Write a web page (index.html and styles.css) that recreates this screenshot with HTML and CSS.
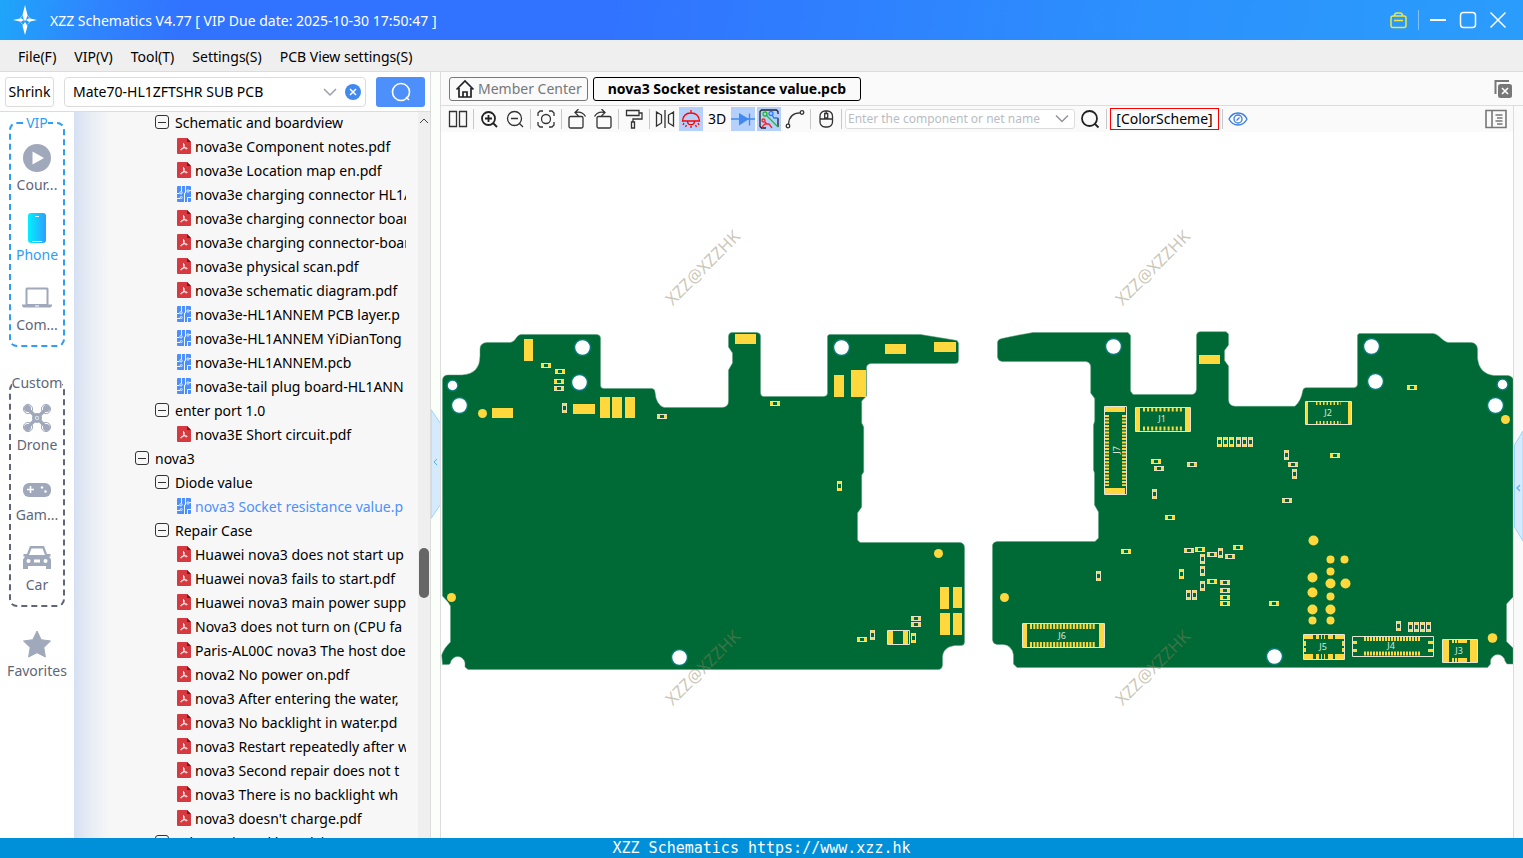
FILE: index.html
```
<!DOCTYPE html>
<html lang="en">
<head>
	<meta charset="UTF-8">
	<title>XZZ Schematics V4.77</title>
	<link rel="stylesheet" href="styles.css">
</head>
<body>
	<!-- shared symbols -->
	<svg class="defs" width="0" height="0" aria-hidden="true">
		<symbol id="pdf" viewBox="0 0 14 16">
			<path d="M1 0h9l4 4v11a1 1 0 0 1-1 1H1a1 1 0 0 1-1-1V1a1 1 0 0 1 1-1z" fill="#d63a41"/>
			<path d="M10 0l4 4h-4z" fill="#8d0f16"/>
			<path d="M6.500 5.500C7.500 6 7.300 7.800 6.800 8.800 6.200 10.200 5 12 4 12c-.8 0-.2-1.200 1.300-1.700C7 9.700 9 9.600 10 10.200c.8.600-.5 1-1.500.4C7.500 9.800 6 7.500 6.500 5.500z" fill="none" stroke="#fff" stroke-width=".9"/>
		</symbol>
		<symbol id="pcb" viewBox="0 0 14 16">
			<rect width="14" height="16" rx="1" fill="#4d90fb"/>
			<path d="M4.500 0v5.500M0 7.500h2.500M8.500 0v7h-1V16M0 12.500h3.500M14 4.500h-2M10.500 16v-4.500H14" fill="none" stroke="#fff" stroke-width=".9"/>
			<g fill="#4d90fb" stroke="#fff" stroke-width=".8"><circle cx="4" cy="6.800" r="1.200"/><circle cx="11" cy="5" r="1.200"/><circle cx="4.300" cy="11.500" r="1"/></g>
		</symbol>
		<symbol id="ph" viewBox="0 0 10 5">
			<rect width="10" height="5" fill="#e4e4d4"/><path d="M0 1h3.500v3H0zM6.500 1H10v3H6.500z" fill="#ffd83d"/><path d="M3 1h4v3H3z" fill="#006a36"/>
		</symbol>
		<symbol id="pv" viewBox="0 0 5 10">
			<rect width="5" height="10" fill="#e4e4d4"/><path d="M1 0h3v3.500H1zM1 6.500h3V10H1z" fill="#ffd83d"/><path d="M1 3h3v4H1z" fill="#006a36"/>
		</symbol>
	</svg>

	<header class="titlebar">
		<svg class="logo" viewBox="0 0 26 30" width="26" height="30">
			<circle cx="13" cy="15" r="5" fill="none" stroke="#9fd0ff" stroke-dasharray="5 2.850"/>
			<path d="M13 0l2.500 10-1.500 5-1 1-1-1-1.500-5zM13 30l2.500-9-2.500-4-2.500 4zM1 15l8-1.800 3 1.800-3 1.800zM25 15l-8-1.800-3 1.800 3 1.800z" fill="#fff"/>
		</svg>
		<h1>XZZ Schematics V4.77 [ VIP Due date: 2025-10-30 17:50:47 ]</h1>
		<div class="win">
			<button aria-label="Toolbox"><svg viewBox="0 0 18 18" width="18" height="18" fill="none" stroke="#f0e83a" stroke-width="1.500"><rect x="1" y="5" width="15" height="11.500" rx="2"/><path d="M4.500 5c0-2 1-3 2.500-3h3c1.500 0 2.500 1 2.500 3M4 9.500h9"/></svg></button>
			<i></i>
			<button aria-label="Minimize"><svg viewBox="0 0 18 18" width="18" height="18"><path d="M1 9h16" stroke="#fff" stroke-width="2"/></svg></button>
			<button aria-label="Maximize"><svg viewBox="0 0 18 18" width="18" height="18"><rect x="1.500" y="1.500" width="15" height="15" rx="3" fill="none" stroke="#fff" stroke-width="1.500"/></svg></button>
			<button aria-label="Close"><svg viewBox="0 0 18 18" width="18" height="18"><path d="M1.500 1.500l15 15M16.500 1.500l-15 15" stroke="#fff" stroke-width="1.500"/></svg></button>
		</div>
	</header>

	<nav class="menu">
		<a href="#">File(F)</a>
		<a href="#">VIP(V)</a>
		<a href="#">Tool(T)</a>
		<a href="#">Settings(S)</a>
		<a href="#">PCB View settings(S)</a>
	</nav>

	<div class="app">
		<aside class="left">
			<form class="search">
				<button type="button" class="shrink">Shrink</button>
				<div class="combo">
					<input type="text" aria-label="Search model" value="Mate70-HL1ZFTSHR SUB PCB">
					<button type="button" aria-label="History"><svg viewBox="0 0 14 10" width="14" height="10"><path d="M1 2l6 6 6-6" fill="none" stroke="#9b9fa8" stroke-width="1.500"/></svg></button>
					<button type="button" aria-label="Clear"><svg viewBox="0 0 16 16" width="16" height="16"><circle cx="8" cy="8" r="8" fill="#4189ee"/><path d="M5 5l6 6M11 5l-6 6" stroke="#fff" stroke-width="1.500"/></svg></button>
				</div>
				<button type="button" class="go" aria-label="Search"><svg viewBox="0 0 20 20" width="20" height="20" fill="none" stroke="#fff" stroke-width="1.600"><circle cx="10" cy="10" r="8.500"/><path d="M15 15l3 3"/></svg></button>
			</form>

			<div class="panes">
				<nav class="side">
					<div class="group vip">
						<b>VIP</b>
						<a href="#"><svg viewBox="0 0 30 30"><circle cx="15" cy="15" r="14" fill="#a0a8bb"/><path d="M10.500 8.500v13l11.500-6.500z" fill="#fff"/></svg>Cour...</a>
						<a href="#" class="on"><svg viewBox="0 0 30 30"><defs><linearGradient id="ph-g"><stop offset="0" stop-color="#00f2fe"/><stop offset="1" stop-color="#2f9dff"/></linearGradient></defs><rect x="6" y="0" width="18" height="30" rx="3" fill="url(#ph-g)"/><path d="M13 3.500h4M10 28.500h10" stroke="#e8fbff" stroke-width="1.200"/></svg>Phone</a>
						<a href="#"><svg viewBox="0 0 30 30" fill="#a0a8bb"><path d="M5 4.500h20a1.500 1.500 0 0 1 1.500 1.500V22h-23V6A1.500 1.500 0 0 1 5 4.500zM5.500 6.500V21h19V6.500z" fill-rule="evenodd"/><path d="M0 21.500h30V23l-1.500 1.500h-27L0 23z"/><path d="M13 22.500h4v1h-4z" fill="#fff"/></svg>Com...</a>
					</div>
					<div class="group">
						<b>Custom</b>
						<a href="#"><svg viewBox="0 0 30 30" fill="none" stroke="#a0a8bb"><path d="M6 6l6 6M24 6l-6 6M6 24l6-6M24 24l-6-6" stroke-width="3.500"/><circle cx="15" cy="15" r="3.500" stroke-width="3"/><circle cx="15" cy="15" r="1" fill="#a0a8bb"/><g fill="#a0a8bb" stroke="none"><circle cx="5.500" cy="5.500" r="3.500"/><circle cx="24.500" cy="5.500" r="3.500"/><circle cx="5.500" cy="24.500" r="3.500"/><circle cx="24.500" cy="24.500" r="3.500"/></g><circle cx="6" cy="6" r="4.600"/><circle cx="24" cy="6" r="4.600"/><circle cx="6" cy="24" r="4.600"/><circle cx="24" cy="24" r="4.600"/></svg>Drone</a>
						<a href="#"><svg viewBox="0 0 30 30"><rect x="1" y="10" width="28" height="14" rx="6" fill="#a0a8bb"/><path d="M5 16.500h7M8.500 13v7" stroke="#fff" stroke-width="1.600"/><circle cx="20" cy="14.500" r="1.200" fill="#fff"/><circle cx="23.500" cy="18.500" r="1.200" fill="#fff"/></svg>Gam...</a>
						<a href="#"><svg viewBox="0 0 30 30"><path d="M8 3h14l3 8h3.500v2.500H27l2 3V26h-5v-3H6v3H1v-9.500l2-3H1.500V11H5z" fill="#a0a8bb"/><path d="M9.500 5.500h11L23 12H7zM12 16.500h6v3h-6z" fill="#fff"/><circle cx="6.500" cy="18" r="2" fill="#fff"/><circle cx="23.500" cy="18" r="2" fill="#fff"/></svg>Car</a>
					</div>
					<a href="#" class="fav"><svg viewBox="0 0 30 30"><path d="M15 2l4.200 8.700 9.300 1.300-6.700 6.600L23.400 28 15 23.700 6.600 28l1.600-9.400L1.500 12l9.300-1.300z" fill="#a0a8bb" stroke="#a0a8bb" stroke-linejoin="round"/></svg>Favorites</a>
				</nav>

				<div class="tree">
					<ul>
						<li class="l2"><button aria-label="Collapse"></button>Schematic and boardview</li>
						<li><svg><use href="#pdf"/></svg><a href="#">nova3e Component notes.pdf</a></li>
						<li><svg><use href="#pdf"/></svg><a href="#">nova3e Location map en.pdf</a></li>
						<li><svg><use href="#pcb"/></svg><a href="#">nova3e charging connector HL1A</a></li>
						<li><svg><use href="#pdf"/></svg><a href="#">nova3e charging connector boar</a></li>
						<li><svg><use href="#pdf"/></svg><a href="#">nova3e charging connector-boar</a></li>
						<li><svg><use href="#pdf"/></svg><a href="#">nova3e physical scan.pdf</a></li>
						<li><svg><use href="#pdf"/></svg><a href="#">nova3e schematic diagram.pdf</a></li>
						<li><svg><use href="#pcb"/></svg><a href="#">nova3e-HL1ANNEM PCB layer.p</a></li>
						<li><svg><use href="#pcb"/></svg><a href="#">nova3e-HL1ANNEM YiDianTong</a></li>
						<li><svg><use href="#pcb"/></svg><a href="#">nova3e-HL1ANNEM.pcb</a></li>
						<li><svg><use href="#pcb"/></svg><a href="#">nova3e-tail plug board-HL1ANN</a></li>
						<li class="l2"><button aria-label="Collapse"></button>enter port 1.0</li>
						<li><svg><use href="#pdf"/></svg><a href="#">nova3E Short circuit.pdf</a></li>
						<li class="l1"><button aria-label="Collapse"></button>nova3</li>
						<li class="l2"><button aria-label="Collapse"></button>Diode value</li>
						<li><svg><use href="#pcb"/></svg><a href="#" class="on">nova3 Socket resistance value.p</a></li>
						<li class="l2"><button aria-label="Collapse"></button>Repair Case</li>
						<li><svg><use href="#pdf"/></svg><a href="#">Huawei nova3 does not start up</a></li>
						<li><svg><use href="#pdf"/></svg><a href="#">Huawei nova3 fails to start.pdf</a></li>
						<li><svg><use href="#pdf"/></svg><a href="#">Huawei nova3 main power supp</a></li>
						<li><svg><use href="#pdf"/></svg><a href="#">Nova3 does not turn on (CPU fa</a></li>
						<li><svg><use href="#pdf"/></svg><a href="#">Paris-AL00C nova3 The host doe</a></li>
						<li><svg><use href="#pdf"/></svg><a href="#">nova2 No power on.pdf</a></li>
						<li><svg><use href="#pdf"/></svg><a href="#">nova3 After entering the water,</a></li>
						<li><svg><use href="#pdf"/></svg><a href="#">nova3 No backlight in water.pd</a></li>
						<li><svg><use href="#pdf"/></svg><a href="#">nova3 Restart repeatedly after w</a></li>
						<li><svg><use href="#pdf"/></svg><a href="#">nova3 Second repair does not t</a></li>
						<li><svg><use href="#pdf"/></svg><a href="#">nova3 There is no backlight wh</a></li>
						<li><svg><use href="#pdf"/></svg><a href="#">nova3 doesn't charge.pdf</a></li>
						<li class="l2"><button aria-label="Collapse"></button>Schematic and boardview</li>
					</ul>
				</div>
				<div class="scroll">
					<svg viewBox="0 0 12 20" width="12" height="20"><path d="M2 11l4-4 4 4" fill="none" stroke="#444"/></svg>
					<i></i>
				</div>
			</div>
		</aside>

		<div class="gutter">
			<svg viewBox="0 0 10 110" width="10" height="110"><path d="M0 .500l9.500 14v81L0 109.500z" fill="#d6eafd" stroke="#9fd3fb"/><path d="M6 50l-3 3 3 3" fill="none" stroke="#5ab0f0"/></svg>
		</div>

		<main>
			<div class="tabs">
				<button class="home"><svg viewBox="0 0 20 20" width="20" height="20" fill="none" stroke="#222" stroke-width="1.700"><path d="M1.500 10.500L10 2l8.500 8.500M4 9v9h12V9M8 18v-5h4v5"/></svg>Member Center</button>
				<button class="active">nova3 Socket resistance value.pcb</button>
				<button class="tool closeall" aria-label="Close all"><svg viewBox="0 0 20 20" width="20" height="20"><path d="M2.500 15V2H16" fill="none" stroke="#777" stroke-width="2"/><rect x="5" y="5" width="14" height="14" rx="2.500" fill="#777"/><path d="M9 9l6 6M15 9l-6 6" stroke="#fff" stroke-width="1.600"/></svg></button>
			</div>

			<div class="view">
				<div class="stage">
					<div class="toolbar">
						<button class="tool" aria-label="Split view"><svg viewBox="0 0 20 20"><path d="M1.500 2.500h7v15h-7zM11.500 2.500h7v15h-7z"/></svg></button>
						<i></i>
						<button class="tool" aria-label="Zoom in"><svg viewBox="0 0 20 20" class="bold"><circle cx="9.500" cy="9.500" r="6.500"/><path d="M14 14l4 4M6 9.500h7M9.500 6v7"/></svg></button>
						<button class="tool" aria-label="Zoom out"><svg viewBox="0 0 20 20"><circle cx="9.500" cy="9.500" r="7"/><path d="M14.500 14.500l3.500 3.500M6 9.500h7"/></svg></button>
						<i></i>
						<button class="tool" aria-label="Fit"><svg viewBox="0 0 20 20"><circle cx="10" cy="10" r="4.500"/><path d="M2 7V4l2-2h3M13 2h3l2 2v3M18 13v3l-2 2h-3M7 18H4l-2-2v-3"/></svg></button>
						<i></i>
						<button class="tool" aria-label="Rotate left"><svg viewBox="0 0 20 20"><rect x="2" y="7.500" width="14" height="11.500" rx="1.500"/><path d="M8 3.500c4-1 8-.5 10.500 4M11.500 0L8 3.500 11.500 7"/></svg></button>
						<button class="tool" aria-label="Rotate right"><svg viewBox="0 0 20 20"><rect x="4" y="7.500" width="14" height="11.500" rx="1.500"/><path d="M12 3.500C8 2.500 4 3 1.500 7.500M8.500 0L12 3.500 8.500 7"/></svg></button>
						<i></i>
						<button class="tool" aria-label="Paint"><svg viewBox="0 0 20 20"><path d="M2.500 1.500H15v5H2.500zM15 4h3v6H9v3M7.500 13h3v6h-3z"/></svg></button>
						<i></i>
						<button class="tool" aria-label="Mirror"><svg viewBox="0 0 20 20"><path d="M1.500 3l5 3v8l-5 3zM18.500 3l-5 3v8l5 3zM10 1v18"/></svg></button>
						<button class="tool on" aria-label="Lamp"><svg viewBox="0 0 20 20" class="red"><path d="M10 1v3M1.500 12C2 7 5 4 10 4s8 3 8.500 8zM6.500 12c0 5 7 5 7 0M3 14l-1 2M17 14l1 2M5.500 16l-1 2M14.500 16l1 2M10 17v2"/></svg></button>
						<button class="tool">3D</button>
						<button class="tool on" aria-label="Diode"><svg viewBox="0 0 24 20" class="wide"><path d="M0 10h24M18.500 4.500v12" stroke="#4189f0"/><path d="M8 4l10 6-10 6.500z" fill="#4189f0" stroke="none"/></svg></button>
						<button class="tool on" aria-label="Net lines"><svg viewBox="0 0 20 20"><path d="M7 19H2.500L1 17.500V2.500L2.500 1h15L19 2.500V5M19 9v9" stroke="#223"/><path d="M7 6l12 12" stroke="#20b82c"/><circle cx="6" cy="5" r="2" stroke="#20b82c"/><path d="M3 18l3-3h4l3 4M5.500 12.500L8 15" stroke="#f22"/><circle cx="4.500" cy="11.500" r="1.500" stroke="#f22"/><circle cx="12" cy="4.500" r="2" stroke="#2a7df0"/><path d="M13 6l2 3h4" stroke="#2a7df0"/></svg></button>
						<button class="tool" aria-label="Curve"><svg viewBox="0 0 20 20"><circle cx="17" cy="3.500" r="1.800"/><circle cx="3" cy="17" r="1.800"/><path d="M15 3.800C8 4 4 8 3.500 15"/></svg></button>
						<i></i>
						<button class="tool" aria-label="Mouse"><svg viewBox="0 0 20 20"><rect x="4" y="2" width="12.500" height="16" rx="5"/><path d="M4 10h12.500M10.200 2v2M8.700 4.500h3V9h-3z"/></svg></button>
						<i></i>
						<div class="net">
							<input type="text" aria-label="Component or net name" placeholder="Enter the component or net name">
							<svg viewBox="0 0 14 10" width="14" height="10"><path d="M1 1.500l6 6 6-6" fill="none" stroke="#8f949c" stroke-width="1.500"/></svg>
						</div>
						<button class="tool find" aria-label="Find"><svg viewBox="0 0 20 20" class="bold"><circle cx="9.500" cy="9.500" r="7.500"/><path d="M15 15l3.500 3.500"/></svg></button>
						<i></i>
						<button class="scheme">[ColorScheme]</button>
						<i></i>
						<button class="tool" aria-label="Show"><svg viewBox="0 0 20 20" class="blue"><path d="M1 10c4-8 14-8 18 0-4 8-14 8-18 0z"/><circle cx="10" cy="10" r="4"/><path d="M8.500 11.500l3-3"/></svg></button>
						<button class="tool panel" aria-label="Side panel"><svg viewBox="0 0 22 20" class="grey"><path d="M1 1.500h20v17H1zM7 1.500v17"/><path d="M10.500 6h7M12 9h5.500M10.500 12h7M12 15h5.500"/></svg></button>
					</div>

					<svg class="board" viewBox="441 132 1072 706" preserveAspectRatio="xMinYMin meet">
						<!-- bottom side -->
						<path class="pcb" d="M442.500 380Q443 375 448 375H462Q480 374 480 356V349Q480 343 487 342.500H510C516 342 516 335 521 334.500H597Q600.500 335 600.500 338V385Q600.500 388.500 604 388.500H652Q655 389 655 392Q656 405 664 407.500H722Q728.500 407 728.500 401V370L732.500 363V353L728.500 347V336Q729 332.500 732 332.500H757Q760.500 333 760.500 336V392Q760.500 396.500 764 396.500H824Q827.500 396 827.500 393V336L829 334.500H920.500L957 340.500L958.500 343V360Q958.500 363.500 955 363.500H871Q866.500 364 866.500 368V396L861.700 401V423L863.700 427V472L861.700 475V507L857.500 513V540L860 542.500H960Q964.500 543 964.500 548V642Q964.500 645.500 961 645.500H955Q943 647 942.500 657V665Q942 669.500 938 669.500H468L465 667V663A7.300 7.300 0 0 0 450.500 663L449 664.500H442.500L441.700 655Q444 648 450.500 642V606L448 602L442.500 596Z"/>
						<g class="gold">
							<path d="M524 339h9v22h-9zM492 408h21v10h-21zM573 404h22v10h-22zM600 397h10v21h-10zM612 397h10v21h-10zM625 397h10v21h-10zM735 334h21v10h-21zM885 344h21v10h-21zM934 342h22v10h-22zM834 375h10v22h-10zM851 370h15v27h-15zM940 587h9v22h-9zM953 587h9v21h-9zM940 613h10v22h-10zM953 613h9v22h-9z"/>
							<circle cx="482.500" cy="413.500" r="4.500"/><circle cx="451.500" cy="597.500" r="4.500"/><circle cx="938.500" cy="553.500" r="4.500"/>
						</g>
						<g class="hole">
							<circle cx="582.500" cy="347.500" r="8"/><circle cx="579.500" cy="382.500" r="8"/><circle cx="459.500" cy="405.500" r="8"/><circle cx="452.500" cy="385.500" r="5.500"/><circle cx="679.500" cy="657.500" r="8"/><circle cx="841.500" cy="347.500" r="8"/>
						</g>
						<use href="#ph" width="10" height="5" x="541" y="363"/><use href="#ph" width="10" height="5" x="555" y="369"/><use href="#ph" width="10" height="5" x="554" y="379"/><use href="#ph" width="10" height="5" x="554" y="386"/><use href="#ph" width="10" height="5" x="657" y="414"/><use href="#ph" width="10" height="5" x="770" y="401"/><use href="#ph" width="10" height="5" x="911" y="616"/><use href="#ph" width="10" height="5" x="911" y="622"/><use href="#ph" width="10" height="5" x="857" y="637"/>
						<use href="#pv" width="5" height="10" x="562" y="403"/><use href="#pv" width="5" height="10" x="837" y="481"/><use href="#pv" width="5" height="10" x="870" y="630"/><use href="#pv" width="5" height="10" x="911" y="633"/>
						<path class="gold" d="M888 630h5v15h-5zM903 630h5v15h-5z"/><path class="frame" d="M887.500 630.500h22v14h-22z"/>

						<!-- top side -->
						<path class="pcb" d="M997.500 342Q998 339 1002 338.500Q1018 335 1033 332.500H1128L1130.500 335.500V391L1133 394.500H1192Q1196 394 1196.500 389V335Q1197 332 1200 331.700H1226L1228.500 334V345L1224.500 350.500V360.500L1228.500 366V400Q1229 406 1235 406.300H1295Q1301 401 1302.700 391Q1303 388 1306 387.700H1354Q1357.500 387 1357.500 384V335L1359 333.500H1433C1439 334 1442 341 1448 342.500H1471Q1477 343 1477.500 349V358Q1479 374 1494 375.500H1508Q1512 376 1513 379V597L1506.500 604V641.500L1513 648V664H1507L1505 661A7.300 7.300 0 0 0 1490.500 661V664L1487.500 667.500H1017L1013.500 664V655Q1012 645 1003 644.500H997Q993 644 992.500 640V545Q993 542 997 541.500H1095L1098.500 538V512L1094.500 505V473L1093.500 470V425L1094.700 421V398.500L1090.700 393V366Q1090 362 1086 361.500H1002Q998 361 997.500 357Z"/>
						<g class="gold">
							<path d="M1199 355h21v9h-21z"/>
							<circle cx="1004.500" cy="597.500" r="4.500"/><circle cx="1505.500" cy="419.500" r="4.500"/><circle cx="1492.500" cy="638" r="4.800"/>
							<circle cx="1313.500" cy="540.500" r="5"/><circle cx="1330.500" cy="559.500" r="4"/><circle cx="1344.500" cy="559.500" r="4"/><circle cx="1330.500" cy="571.500" r="4"/><circle cx="1312.500" cy="577.500" r="5"/><circle cx="1330.500" cy="583.500" r="5"/><circle cx="1345.500" cy="583.500" r="5"/><circle cx="1312.500" cy="592.500" r="5"/><circle cx="1330.500" cy="596.500" r="4"/><circle cx="1312.500" cy="609.500" r="5"/><circle cx="1330.500" cy="609.500" r="5"/><circle cx="1312.500" cy="620.500" r="4"/><circle cx="1330.500" cy="620.500" r="4"/>
						</g>
						<g class="hole">
							<circle cx="1113.500" cy="346.500" r="8"/><circle cx="1371.500" cy="346.500" r="8"/><circle cx="1375.500" cy="381.500" r="8"/><circle cx="1502.500" cy="384.500" r="5.500"/><circle cx="1495.500" cy="405.500" r="8"/><circle cx="1274.500" cy="656.500" r="8"/>
						</g>
						<use href="#ph" width="10" height="5" x="1151" y="459"/><use href="#ph" width="10" height="5" x="1154" y="466"/><use href="#ph" width="10" height="5" x="1187" y="462"/><use href="#ph" width="10" height="5" x="1165" y="515"/><use href="#ph" width="10" height="5" x="1121" y="549"/><use href="#ph" width="10" height="5" x="1184" y="548"/><use href="#ph" width="10" height="5" x="1195" y="547"/><use href="#ph" width="10" height="5" x="1207" y="552"/><use href="#ph" width="10" height="5" x="1225" y="554"/><use href="#ph" width="10" height="5" x="1233" y="545"/><use href="#ph" width="10" height="5" x="1207" y="579"/><use href="#ph" width="10" height="5" x="1220" y="580"/><use href="#ph" width="10" height="5" x="1220" y="588"/><use href="#ph" width="10" height="5" x="1220" y="595"/><use href="#ph" width="10" height="5" x="1220" y="601"/><use href="#ph" width="10" height="5" x="1407" y="385"/><use href="#ph" width="10" height="5" x="1330" y="453"/><use href="#ph" width="10" height="5" x="1288" y="462"/><use href="#ph" width="10" height="5" x="1282" y="498"/><use href="#ph" width="10" height="5" x="1269" y="601"/>
						<use href="#pv" width="5" height="10" x="1217" y="437"/><use href="#pv" width="5" height="10" x="1223" y="437"/><use href="#pv" width="5" height="10" x="1229" y="437"/><use href="#pv" width="5" height="10" x="1236" y="437"/><use href="#pv" width="5" height="10" x="1242" y="437"/><use href="#pv" width="5" height="10" x="1248" y="437"/><use href="#pv" width="5" height="10" x="1152" y="489"/><use href="#pv" width="5" height="10" x="1096" y="571"/><use href="#pv" width="5" height="10" x="1200" y="554"/><use href="#pv" width="5" height="10" x="1218" y="548"/><use href="#pv" width="5" height="10" x="1200" y="566"/><use href="#pv" width="5" height="10" x="1179" y="569"/><use href="#pv" width="5" height="10" x="1200" y="581"/><use href="#pv" width="5" height="10" x="1186" y="590"/><use href="#pv" width="5" height="10" x="1192" y="590"/><use href="#pv" width="5" height="10" x="1284" y="450"/><use href="#pv" width="5" height="10" x="1292" y="469"/><use href="#pv" width="5" height="10" x="1396" y="621"/><use href="#pv" width="5" height="10" x="1408" y="622"/><use href="#pv" width="5" height="10" x="1414" y="622"/><use href="#pv" width="5" height="10" x="1420" y="622"/><use href="#pv" width="5" height="10" x="1426" y="622"/>

						<!-- connectors -->
						<path class="gold" d="M1136 408h4v23h-4zM1185 408h5v23h-5zM1023 624h4v23h-4zM1099 624h5v23h-5zM1105 407h20v5h-20zM1105 488h20v6h-20zM1306 402h2v22h-2zM1348 402h3v22h-3zM1353 641h4v3h-4zM1353 649h4v3h-4zM1428 641h5v3h-5zM1428 649h5v3h-5zM1443 640h6v22h-6zM1470 640h7v22h-7z"/>
						<path class="gold" d="M1304 635h9v4h-9zM1316 635h3v4h-3zM1321 635h1v4h-1zM1324 635h1v4h-1zM1328 635h5v4h-5zM1335 635h9v4h-9zM1304 654h9v5h-9zM1316 654h3v5h-3zM1321 654h1v5h-1zM1324 654h1v5h-1zM1328 654h5v5h-5zM1335 654h9v5h-9zM1304 641h2v5h-2zM1304 648h2v4h-2zM1342 641h2v5h-2zM1342 648h2v4h-2z"/>
						<path class="gold" d="M1452 640h2v3h-2zM1455 640h2v3h-2zM1458 640h9v3h-9zM1452 658h2v4h-2zM1455 658h2v4h-2zM1458 658h9v4h-9z"/>
						<path class="teeth" stroke-width="4" stroke-dasharray="2 2.100" d="M1143 409.500h39M1143 428.500h39"/>
						<path class="teeth" stroke-width="5" stroke-dasharray="2 1.300" d="M1030 626.500h65M1030 644.500h65"/>
						<path class="teeth" stroke-width="4" stroke-dasharray="2 1.300" d="M1107 415v71M1124 415v71"/>
						<path class="teeth" stroke-width="3" stroke-dasharray="1.500 2" d="M1316 403.500h25M1316 422.500h25"/>
						<path class="teeth" stroke-width="4" stroke-dasharray="2 1" d="M1364 639h57M1364 653.500h57"/>
						<path class="frame" d="M1135.500 407.500h55v24h-55zM1022.500 623.500h82v24h-82zM1104.500 406.500h22v88h-22zM1305.500 401.500h46v23h-46zM1303.500 634.500h41v25h-41zM1352.500 636.500h81v20h-81zM1442.500 639.500h35v23h-35z"/>
						<g class="ref">
							<text x="1162" y="422">J1</text><text x="1328" y="416">J2</text><text x="1459" y="654">J3</text><text x="1391" y="649">J4</text><text x="1323" y="650">J5</text><text x="1062" y="639">J6</text><text x="1120" y="450" transform="rotate(-90 1120 450)">J7</text>
						</g>
						<g class="mark">
							<text transform="translate(707 272) rotate(-45)">XZZ@XZZHK</text><text transform="translate(1157 272) rotate(-45)">XZZ@XZZHK</text><text transform="translate(707 672) rotate(-45)">XZZ@XZZHK</text><text transform="translate(1157 672) rotate(-45)">XZZ@XZZHK</text>
						</g>
					</svg>
				</div>
				<div class="strip">
					<svg viewBox="0 0 9 110" width="9" height="110"><path d="M9 0L.500 14v82L9 110z" fill="#d6eafd" stroke="#9fd3fb"/><path d="M6 54l-3 3 3 3" fill="none" stroke="#5ab0f0" stroke-width="1.300"/></svg>
				</div>
			</div>
		</main>
	</div>

	<footer>XZZ Schematics https://www.xzz.hk</footer>
</body>
</html>
```
FILE: styles.css
```
*{
	margin: 0;
	padding: 0;
	box-sizing: border-box;
}
body{
	display: flex;
	flex-direction: column;
	height: 100vh;
	overflow: hidden;
	background: #fff;
	color: #000;
	font: 14px/20px "Noto Sans", "Open Sans", sans-serif;
}
a{
	color: inherit;
	text-decoration: none;
}
button, input{
	font: inherit;
	color: inherit;
	border: 0;
	background: none;
}
ul{
	list-style: none;
}
svg{
	display: block;
	flex: none;
}
.defs{
	position: absolute;
}

/* title bar */
.titlebar{
	display: flex;
	align-items: center;
	flex: none;
	height: 40px;
	padding: 0 16px 0 12px;
	background: linear-gradient(100deg, #1ea6fa 0, #2f86fe 6%, #3173ff 12%, #3173ff 40%, #2c90fd 75%, #2a9dfc 100%);
	color: #fff;
}
.titlebar h1{
	flex: 1;
	margin-left: 12px;
	padding-top: 2px;
	font-size: 14px;
	font-weight: normal;
}
.win{
	display: flex;
	align-items: center;
	gap: 12px;
}
.win i{
	width: 1px;
	height: 20px;
	margin: 0 -2px;
	background: #7fc0ff;
}

/* menu */
.menu{
	display: flex;
	align-items: center;
	gap: 18px;
	flex: none;
	height: 32px;
	padding: 2px 18px 0;
	background: #efefef;
	border-bottom: 1px solid #dcdcdc;
}
.app{
	display: flex;
	flex: 1;
	min-height: 0;
}

/* left column */
.left{
	display: flex;
	flex-direction: column;
	flex: none;
	width: 431px;
	border-right: 1px solid #dcdcdc;
}
.search{
	display: flex;
	align-items: center;
	flex: none;
	height: 40px;
	padding: 0 5px;
	border-bottom: 1px solid #dcdcdc;
}
.shrink{
	width: 49px;
	height: 30px;
	border: 1px solid #dcdcdc;
	border-radius: 3px;
}
.combo{
	display: flex;
	align-items: center;
	gap: 8px;
	flex: 1;
	height: 30px;
	margin: 0 10px;
	padding: 0 4px 0 8px;
	border: 1px solid #dcdcdc;
	border-radius: 4px;
}
.combo input{
	flex: 1;
	min-width: 0;
}
.go{
	display: flex;
	align-items: center;
	justify-content: center;
	width: 49px;
	height: 30px;
	border-radius: 3px;
	background: #4d90fb;
}
.panes{
	display: flex;
	flex: 1;
	min-height: 0;
}

/* category bar */
.side{
	flex: none;
	width: 74px;
	padding: 10px 0 0;
	color: #5e6678;
	text-align: center;
}
.side a{
	display: block;
}
.side a svg{
	width: 30px;
	height: 30px;
	margin: 0 auto 2px;
}
.group{
	display: flex;
	flex-direction: column;
	gap: 18px;
	height: 225px;
	margin: 0 9px 35px;
	padding-top: 21px;
	border: 2px dashed #5e6678;
	border-radius: 8px;
}
.group b{
	align-self: center;
	margin: -32px 0 -8px;
	background: #fff;
	font-weight: normal;
}
.vip{
	border-color: #2f9df4;
}
.vip b, .side .on{
	color: #2f9df4;
}
.fav{
	margin-top: -13px;
}

/* file tree */
.tree{
	flex: 1;
	min-width: 0;
	padding-right: 12px;
	overflow: hidden;
	background: linear-gradient(90deg, #d5e0f2 0, #e6ebf4 14px, #f7f7f7 36px);
}
.tree ul{
	margin-top: -1px;
	overflow: hidden;
}
.tree li{
	display: flex;
	align-items: center;
	gap: 4px;
	height: 24px;
	padding-left: 103px;
	white-space: nowrap;
}
.tree svg, .tree button{
	width: 14px;
	height: 16px;
	margin-bottom: 2px;
}
.tree .l1, .tree .l2{
	gap: 6px;
}
.tree .l1{
	padding-left: 61px;
}
.tree .l2{
	padding-left: 81px;
}
.tree button{
	height: 14px;
	border: 1px solid #333;
	border-radius: 3px;
	background: linear-gradient(#333, #333) center / 8px 1px no-repeat;
}
.tree .on{
	color: #4d90fb;
}
.scroll{
	flex: none;
	width: 12px;
	background: #efefef;
}
.scroll i{
	display: block;
	width: 10px;
	height: 50px;
	margin: 416px 1px 0;
	border-radius: 5px;
	background: #666;
}

.gutter{
	display: flex;
	align-items: center;
	flex: none;
	width: 9px;
	padding-top: 18px;
	background: #fafffa;
}

/* viewer */
main{
	display: flex;
	flex-direction: column;
	flex: 1;
	min-width: 0;
	border-left: 1px solid #dcdcdc;
}
.tabs{
	display: flex;
	align-items: center;
	gap: 5px;
	flex: none;
	height: 34px;
	padding: 0 8px;
	background: #fafafa;
	border-bottom: 1px solid #dcdcdc;
}
.tabs .home, .tabs .active{
	display: flex;
	align-items: center;
	height: 24px;
	border: 1px solid #777;
	border-radius: 3px;
	color: #777;
}
.tabs .home{
	gap: 3px;
	padding: 0 5px;
}
.tabs .active{
	padding: 0 14px;
	border-color: #000;
	color: #000;
	font-weight: bold;
}
.tabs .closeall{
	margin-left: auto;
}
.view{
	display: flex;
	flex: 1;
	min-height: 0;
}
.stage{
	display: flex;
	flex-direction: column;
	flex: 1;
	min-width: 0;
}
.toolbar{
	display: flex;
	align-items: center;
	gap: 2px;
	flex: none;
	height: 26px;
	padding: 0 5px;
	background: #fafafa;
}
.toolbar i{
	flex: none;
	width: 1px;
	height: 20px;
	margin: 0 1px;
	background: #c8c8c8;
}
.tool{
	display: flex;
	align-items: center;
	justify-content: center;
	flex: none;
	width: 24px;
	height: 24px;
}
.toolbar .on{
	background: #b5d0fb;
}
.toolbar .tool svg{
	width: 20px;
	height: 20px;
	fill: none;
	stroke: #333;
	stroke-width: 1.3;
}
.toolbar .tool .bold{
	stroke: #222;
	stroke-width: 1.8;
}
.toolbar .tool .wide{
	width: 24px;
}
.toolbar .tool .red{
	stroke: #f00;
}
.toolbar .tool .blue{
	stroke: #3a7de0;
}
.toolbar .tool .grey{
	width: 22px;
	stroke: #777;
	stroke-width: 1.6;
}
.toolbar .find{
	width: 26px;
}
.toolbar .panel{
	margin-left: auto;
}
.net{
	display: flex;
	align-items: center;
	gap: 6px;
	flex: none;
	width: 230px;
	height: 20px;
	padding: 0 5px 0 2px;
	border: 1px solid #dcdcdc;
	border-radius: 3px;
	background: #fff;
}
.net input{
	flex: 1;
	min-width: 0;
	font-size: 12px;
	line-height: 18px;
}
.net input::placeholder{
	color: #b8bcc4;
}
.scheme{
	flex: none;
	width: 109px;
	height: 22px;
	border: 1px solid #f00;
}
.strip{
	display: flex;
	align-items: center;
	flex: none;
	width: 10px;
	padding-top: 28px;
	border-left: 1px solid #dcdcdc;
	background: #fafafa;
}

/* board drawing */
.board{
	flex: 1;
	width: 100%;
	min-height: 0;
}
.pcb{
	fill: #006a36;
	stroke: #5d9f7c;
	stroke-width: .5;
}
.gold{
	fill: #ffd83d;
}
.teeth{
	fill: none;
	stroke: #ffd83d;
}
.frame{
	fill: none;
	stroke: #e4e6d8;
}
.hole{
	fill: #fff;
	stroke: #067a78;
	stroke-width: 1.5;
}
.ref{
	fill: #d8e6dc;
	font-size: 9px;
	text-anchor: middle;
}
.mark{
	fill: #8a7f60;
	fill-opacity: .45;
	font-size: 17px;
	text-anchor: middle;
}

footer{
	flex: none;
	height: 20px;
	background: #0090da;
	color: #fff;
	font: 15px/20px "DejaVu Sans Mono", monospace;
	text-align: center;
}
```
